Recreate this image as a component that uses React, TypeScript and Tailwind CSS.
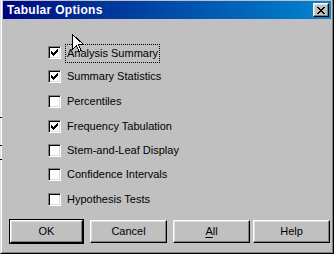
import React from "react";

const options = [
  { label: "Analysis Summary", checked: true, focus: true, h: "h-[24px]" },
  { label: "Summary Statistics", checked: true, h: "h-[25px]" },
  { label: "Percentiles", checked: false, h: "h-[25px]" },
  { label: "Frequency Tabulation", checked: true, h: "h-[24px]" },
  { label: "Stem-and-Leaf Display", checked: false, h: "h-[24px]" },
  { label: "Confidence Intervals", checked: false, h: "h-[25px]" },
  { label: "Hypothesis Tests", checked: false, h: "h-[13px]" },
];

const raised =
  "border border-t-white border-l-white border-r-black border-b-black shadow-[inset_-1px_-1px_0_#808080,inset_1px_1px_0_#dfdfdf] bg-[#c0c0c0]";

function CheckMark() {
  // classic 7x7 pixel tick
  return (
    <svg width="7" height="7" viewBox="0 0 7 7" shapeRendering="crispEdges" className="block">
      <path
        d="M6 0h1v3h-1zM5 1h1v3h-1zM4 2h1v3h-1zM3 3h1v3h-1zM2 4h1v3h-1zM1 3h1v3h-1zM0 2h1v3h-1z"
        fill="#000"
      />
    </svg>
  );
}

function Checkbox({ checked }: { checked: boolean }) {
  return (
    <span className="w-[13px] h-[13px] flex-shrink-0 bg-white border border-t-[#808080] border-l-[#808080] border-b-white border-r-white shadow-[inset_1px_1px_0_#000,inset_-1px_-1px_0_#dfdfdf] flex items-center justify-center">
      {checked && <CheckMark />}
    </span>
  );
}

function Button({ children, isDefault }: { children: React.ReactNode; isDefault?: boolean }) {
  if (isDefault) {
    return (
      <div className="border border-black w-[75px] h-[25px] flex">
        <div className={`${raised} flex-1 flex items-center justify-center`}>{children}</div>
      </div>
    );
  }
  return (
    <div className={`${raised} w-[77px] h-[23px] flex items-center justify-center`}>{children}</div>
  );
}

function Cursor() {
  return (
    <svg width="12" height="19" viewBox="0 0 12 19" shapeRendering="crispEdges" className="absolute left-[72px] top-[34px]">
      <path d="M0.5 0.5V15.5L4.5 11.5L7 17.5L9 16.5L6.5 10.5H11.5Z" fill="#fff" stroke="#000" strokeWidth="1" />
    </svg>
  );
}

export default function App() {
  return (
    <div
      className="relative w-[334px] h-[254px] bg-white text-black text-[11px] leading-[13px] select-none"
      style={{ fontFamily: '"Liberation Sans", Arial, sans-serif' }}
    >
      {/* window frame */}
      <div className="w-full h-full flex flex-col bg-[#c0c0c0] border-l border-l-[#dfdfdf] border-r border-r-black border-b border-b-black">
        <div className="flex-1 flex flex-col border-l border-l-white border-r border-r-[#808080] border-b border-b-[#808080] pl-px pr-px pb-px">
          {/* Title bar */}
          <div className="mt-px h-[18px] flex items-center justify-between bg-gradient-to-r from-[#000080] to-[#1084d0] pl-[4px] pr-[2px]">
            <span className="text-white font-bold text-[12px] tracking-[0.3px]">Tabular Options</span>
            <div className={`${raised} w-[16px] h-[14px] flex items-center justify-center`}>
              <svg width="8" height="7" viewBox="0 0 8 7" shapeRendering="crispEdges">
                <path
                  d="M0 0h2v1h-2zM6 0h2v1h-2zM1 1h2v1h-2zM5 1h2v1h-2zM2 2h4v1h-4zM3 3h2v1h-2zM2 4h4v1h-4zM1 5h2v1h-2zM5 5h2v1h-2zM0 6h2v1h-2zM6 6h2v1h-2z"
                  fill="#000"
                />
              </svg>
            </div>
          </div>

          {/* Options */}
          <div className="flex flex-col pl-[45px] pt-[27px]">
            {options.map((o) => (
              <div key={o.label} className={`${o.h} flex items-start`}>
                <Checkbox checked={o.checked} />
                <span
                  className={
                    o.focus
                      ? "ml-[4px] -mt-[2px] px-[1px] py-[2px] border border-dotted border-black leading-[13px]"
                      : "ml-[5px] px-[1px] leading-[13px]"
                  }
                >
                  {o.label}
                </span>
              </div>
            ))}
          </div>

          {/* Buttons */}
          <div className="flex items-center pl-[6px] pt-[13px]">
            <Button isDefault>OK</Button>
            <div className="ml-[6px]">
              <Button>Cancel</Button>
            </div>
            <div className="ml-[6px]">
              <Button>
                <span className="underline underline-offset-2">A</span>ll
              </Button>
            </div>
            <div className="ml-[3px]">
              <Button>Help</Button>
            </div>
          </div>
        </div>
      </div>

      {/* marks left of the window */}
      <span className="absolute left-0 top-[117px] w-[2px] h-px bg-black" />
      <span className="absolute left-0 top-[145px] w-[2px] h-px bg-black" />
      <span className="absolute left-0 top-[159px] w-[2px] h-px bg-black" />

      <Cursor />
    </div>
  );
}
